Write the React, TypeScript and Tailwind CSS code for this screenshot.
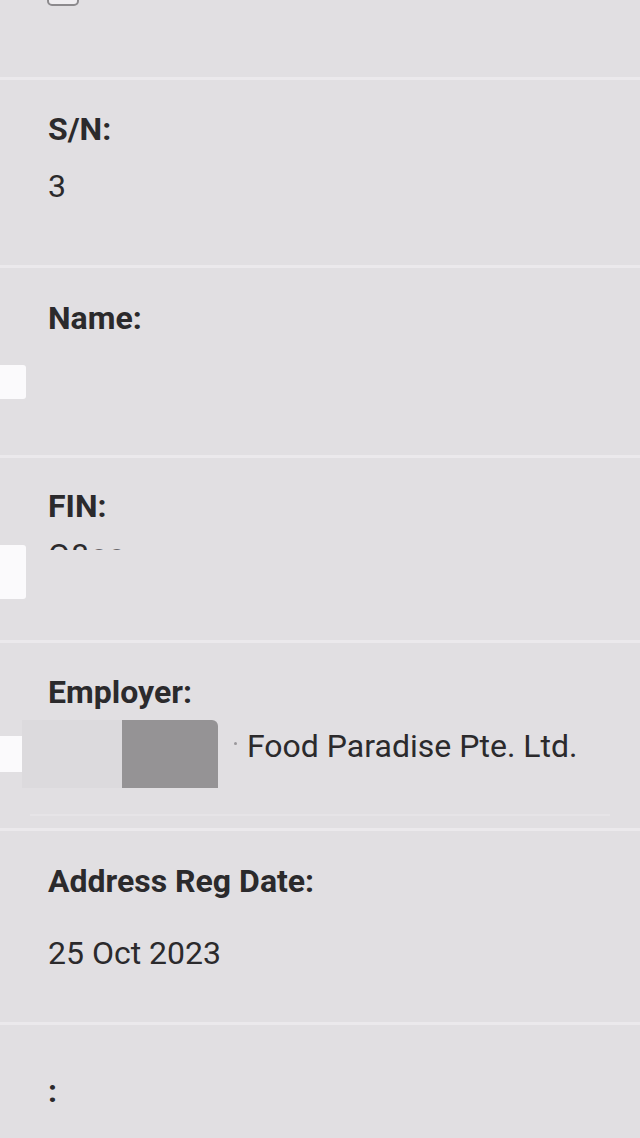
import React from "react";

const font = { fontFamily: "Roboto, 'Noto Sans', sans-serif" };

const Divider = () => <div className="h-[3px] bg-[#ebe9ec]" />;

const Label = ({ text }: { text: string }) => (
  <div className="text-[32px] leading-[36px] font-bold text-[#2b2a2c]">{text}</div>
);

const App: React.FC = () => {
  return (
    <div className="w-[640px] h-[1138px] overflow-hidden bg-[#e1dfe2]" style={font}>
      {/* top row with checkbox */}
      <div className="relative h-[77px]">
        <div className="absolute left-[47px] top-[-26px] w-[32px] h-[32px] rounded-[5px] border-2 border-[#8c8a8d] bg-[#efedf0]" />
      </div>
      <Divider />

      {/* S/N */}
      <div className="h-[185px] pl-[48px] pt-[31px]">
        <Label text="S/N:" />
        <div className="mt-[21px] text-[32px] leading-[36px] text-[#2b2a2c]">3</div>
      </div>
      <Divider />

      {/* Name */}
      <div className="relative h-[187px] pl-[48px] pt-[32px]">
        <Label text="Name:" />
        <div className="absolute left-0 top-[97px] w-[26px] h-[34px] bg-[#fbfafc] rounded-r-[3px]" />
      </div>
      <Divider />

      {/* FIN */}
      <div className="relative h-[182px] pl-[48px] pt-[30px]">
        <Label text="FIN:" />
        <div className="mt-[13px] h-[13px] overflow-hidden">
          <div className="text-[32px] leading-[36px] text-[#2b2a2c] tracking-[1px]">
            O8<span className="text-[#6a686b]">cc</span>
            <span className="text-[#b0aeb1]">-</span>
          </div>
        </div>
        <div className="absolute left-0 top-[87px] w-[26px] h-[54px] bg-[#fbfafc] rounded-r-[3px]" />
      </div>
      <Divider />

      {/* Employer */}
      <div className="relative h-[185px] pt-[31px]">
        <div className="pl-[48px]">
          <Label text="Employer:" />
        </div>
        <div className="mt-[10px] flex items-start h-[70px]">
          <div className="mt-[16px] w-[22px] h-[36px] bg-[#fbfafc]" />
          <div className="w-[100px] h-[68px] bg-[#dcdadd]" />
          <div className="w-[96px] h-[68px] bg-[#959395] rounded-tr-[6px]" />
          <div className="mt-[22px] ml-[16px] w-[3px] h-[3px] rounded-full bg-[#9a989b]" />
          <div className="mt-[8px] ml-[10px] text-[32px] leading-[36px] text-[#2b2a2c]">
            Food Paradise Pte. Ltd.
          </div>
        </div>
        <div className="absolute left-[30px] right-[30px] bottom-[12px] h-[2px] bg-[#e6e4e7]" />
      </div>
      <Divider />

      {/* Address Reg Date */}
      <div className="h-[191px] pl-[48px] pt-[32px]">
        <Label text="Address Reg Date:" />
        <div className="mt-[36px] text-[32px] leading-[36px] text-[#2b2a2c]">25 Oct 2023</div>
      </div>
      <Divider />

      {/* last */}
      <div className="pl-[48px] pt-[48px]">
        <Label text=":" />
      </div>
    </div>
  );
};

export default App;
